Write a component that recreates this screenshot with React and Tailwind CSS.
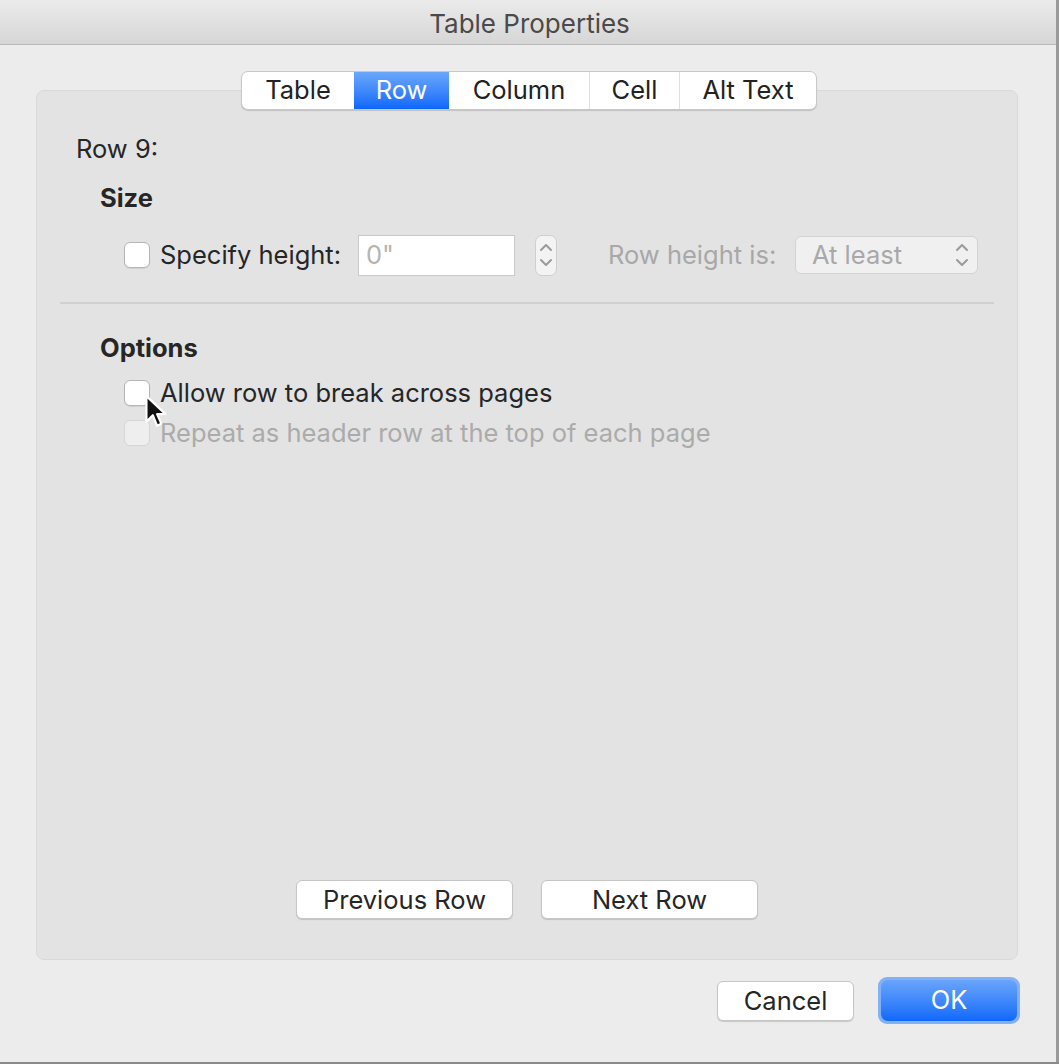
import React from 'react';

const font = { fontFamily: 'Inter, "Noto Sans", sans-serif' };

const Checkbox = ({ disabled }) => (
    <div className={`w-[26px] h-[26px] rounded-[6px] border shrink-0 ${disabled ? 'bg-[#eeeeee] border-[#d6d6d6]' : 'bg-white border-[#b5b5b5] shadow-[0_1px_1px_rgba(0,0,0,0.08)]'}`} />
);

const Chevrons = ({ className }) => (
    <svg width="14" height="26" viewBox="0 0 14 26" className={className} fill="none" stroke="currentColor" strokeWidth="2" strokeLinecap="round" strokeLinejoin="round">
        <path d="M2 8 L7 3 L12 8" />
        <path d="M2 18 L7 23 L12 18" />
    </svg>
);

const Cursor = () => (
    <svg width="24" height="36" viewBox="0 0 22 34" className="absolute left-[144px] top-[394px]">
        <path d="M2 2 L2 26 L8 20 L12 30 L16 28 L12 19 L20 19 Z" fill="#111" stroke="#fff" strokeWidth="2" strokeLinejoin="round" />
    </svg>
);

const tabs = ['Table', 'Row', 'Column', 'Cell', 'Alt Text'];
const tabWidths = ['w-[112px]', 'w-[95px]', 'w-[140px]', 'w-[90px]', 'w-[137px]'];

export default function App() {
    return (
        <div className="relative w-[1059px] h-[1064px] bg-[#ececec] overflow-hidden text-[#262626] text-[25.5px]" style={font}>
            {/* title bar */}
            <div className="h-[45px] bg-gradient-to-b from-[#ebebeb] to-[#d6d6d6] border-b border-[#b9b9b9] flex items-center justify-center">
                <span className="text-[26px] text-[#4a4a4a] pt-[3px]">Table Properties</span>
            </div>

            {/* panel */}
            <div className="relative mx-[36px] mt-[45px] w-[982px] h-[870px] bg-[#e3e3e3] border border-[#d9d9d9] rounded-[8px]">
                {/* tabs */}
                <div className="absolute left-[204px] top-[-20px] flex h-[39px] bg-white rounded-[7px] border border-[#c8c8c8] shadow-[0_1px_1px_rgba(0,0,0,0.15)] overflow-hidden">
                    {tabs.map((t, i) => (
                        <div
                            key={t}
                            className={`${tabWidths[i]} flex items-center justify-center ${i === 1 ? 'bg-gradient-to-b from-[#6aa6fb] to-[#0a67fb] text-white' : 'text-[#222]'} ${i > 2 ? 'border-l border-[#e0e0e0]' : ''}`}
                        >
                            {t}
                        </div>
                    ))}
                </div>

                <div className="pt-[43px] pl-[39px] h-[73px] leading-[30px]">Row 9:</div>

                <div className="pl-[63px] mt-[19px] h-[30px] leading-[30px] font-bold">Size</div>

                <div className="flex items-center mt-[21px] pl-[87px] h-[42px]">
                    <Checkbox />
                    <span className="ml-[10px] w-[198px]">Specify height:</span>
                    <div className="w-[157px] h-[41px] bg-white border border-[#c9c9c9] flex items-center pl-[7px] text-[#b4b4b4]">0"</div>
                    <div className="ml-[20px] w-[22px] h-[41px] rounded-[7px] bg-[#f3f3f3] border border-[#cfcfcf] flex items-center justify-center text-[#9a9a9a]">
                        <Chevrons />
                    </div>
                    <span className="ml-[51px] w-[187px] text-[#a8a8a8]">Row height is:</span>
                    <div className="w-[183px] h-[38px] rounded-[6px] bg-[#f0f0f0] border border-[#d3d3d3] flex items-center justify-between pl-[16px] pr-[8px] text-[#a8a8a8]">
                        <span>At least</span>
                        <Chevrons className="text-[#9a9a9a]" />
                    </div>
                </div>

                <div className="mx-[23px] mt-[26px] h-[2px] bg-[#d0d0d0]" />

                <div className="pl-[63px] mt-[29px] h-[30px] leading-[30px] font-bold">Options</div>

                <div className="flex items-center mt-[17px] pl-[87px] h-[26px]">
                    <Checkbox />
                    <span className="ml-[10px]">Allow row to break across pages</span>
                </div>
                <div className="flex items-center mt-[14px] pl-[87px] h-[26px]">
                    <Checkbox disabled />
                    <span className="ml-[10px] text-[#ababab]">Repeat as header row at the top of each page</span>
                </div>

                <div className="absolute left-0 right-0 top-[789px] flex justify-center gap-[28px]">
                    <button className="w-[217px] h-[39px] bg-white rounded-[6px] border border-[#c6c6c6] shadow-[0_1px_1px_rgba(0,0,0,0.15)]">Previous Row</button>
                    <button className="w-[217px] h-[39px] bg-white rounded-[6px] border border-[#c6c6c6] shadow-[0_1px_1px_rgba(0,0,0,0.15)]">Next Row</button>
                </div>
            </div>

            <div className="flex justify-end items-center mt-[17px] pr-[39px] gap-[24px]">
                <button className="w-[137px] h-[40px] bg-white rounded-[6px] border border-[#c6c6c6] shadow-[0_1px_1px_rgba(0,0,0,0.15)]">Cancel</button>
                <div className="rounded-[9px] bg-[#82b2f5] p-[3px]">
                    <button className="w-[136px] h-[41px] rounded-[7px] bg-gradient-to-b from-[#68a4fa] to-[#0d68fb] text-white">OK</button>
                </div>
            </div>

            <Cursor />

            {/* window edges */}
            <div className="absolute right-0 top-0 bottom-0 w-[3px] bg-[#9a9a9a]" />
            <div className="absolute left-0 right-0 bottom-0 h-[2px] bg-[#8a8a8a]" />
        </div>
    );
}
